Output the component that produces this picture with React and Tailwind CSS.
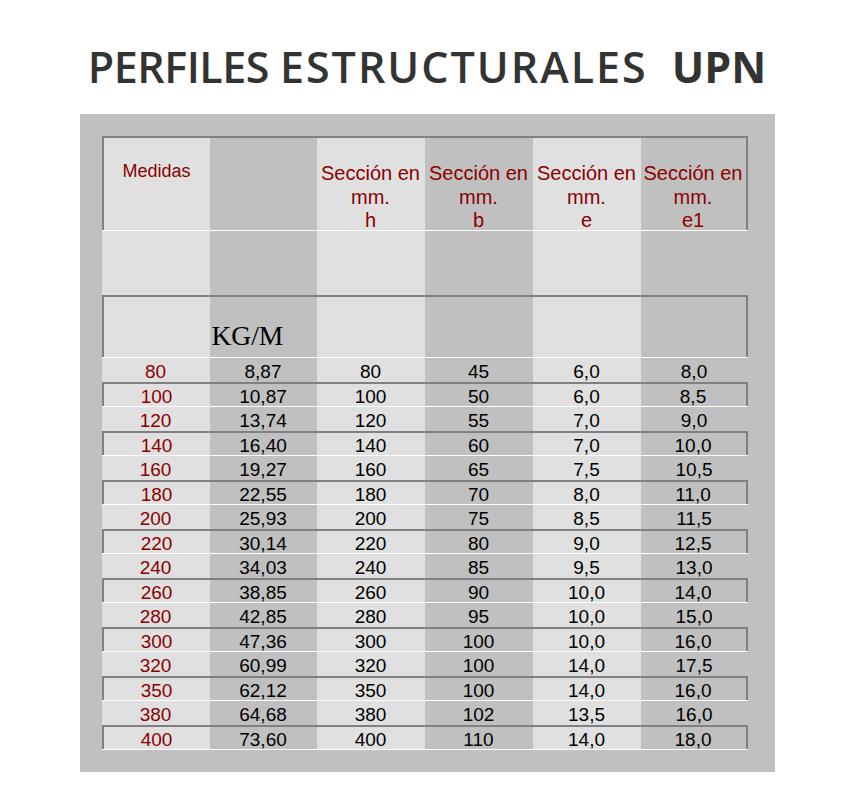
import React from 'react';

const rows = [
    ['80', '8,87', '80', '45', '6,0', '8,0'],
    ['100', '10,87', '100', '50', '6,0', '8,5'],
    ['120', '13,74', '120', '55', '7,0', '9,0'],
    ['140', '16,40', '140', '60', '7,0', '10,0'],
    ['160', '19,27', '160', '65', '7,5', '10,5'],
    ['180', '22,55', '180', '70', '8,0', '11,0'],
    ['200', '25,93', '200', '75', '8,5', '11,5'],
    ['220', '30,14', '220', '80', '9,0', '12,5'],
    ['240', '34,03', '240', '85', '9,5', '13,0'],
    ['260', '38,85', '260', '90', '10,0', '14,0'],
    ['280', '42,85', '280', '95', '10,0', '15,0'],
    ['300', '47,36', '300', '100', '10,0', '16,0'],
    ['320', '60,99', '320', '100', '14,0', '17,5'],
    ['350', '62,12', '350', '100', '14,0', '16,0'],
    ['380', '64,68', '380', '102', '13,5', '16,0'],
    ['400', '73,60', '400', '110', '14,0', '18,0'],
];

const widths = ['w-[108px]', 'w-[107px]', 'w-[108px]', 'w-[108px]', 'w-[108px]', 'w-[107px]'];
const shade = (i) => (i % 2 === 0 ? 'bg-[#e0e0e0]' : 'bg-[#c0c0c0]');

// one table row; boxed rows get the dark grey frame, the rest a thin white line on top
const Row = ({ boxed, height, children }) => (
    <div className={`flex ${height}`}>
        {React.Children.map(children, (cell, i) => (
            <div
                className={`${widths[i]} ${shade(i)} ${
                    boxed ? 'border-t-2 border-[#808080]' : 'border-t border-white'
                } ${boxed && i === 0 ? 'border-l-2' : ''} ${boxed && i === 5 ? 'border-r-2' : ''} flex flex-col`}
            >
                {cell}
            </div>
        ))}
    </div>
);

const Seccion = ({ letter }) => (
    <div className="pt-[24px] text-center text-[20px] leading-[23.5px] whitespace-nowrap text-[#8b0000]">
        Sección en
        <br />
        mm.
        <br />
        {letter}
    </div>
);

const App = () => {
    return (
        <div className="min-h-screen bg-white pb-5" style={{ fontFamily: '"Liberation Sans", Arial, sans-serif' }}>
            <h1
                className="pt-[42px] pb-[23px] text-center text-[43px] font-semibold leading-[49px] whitespace-nowrap text-[#333333]"
                style={{ fontFamily: '"Open Sans", sans-serif' }}
            >
                <span className="tracking-[-0.5px]">PERFILES</span>{' '}
                <span className="tracking-[2px]">ESTRUCTURALES</span>
                <span className="ml-[24px] font-bold">UPN</span>
            </h1>

            <div className="mx-auto w-[695px] bg-[#c0c0c0] pl-[22px] pr-[27px] py-[22px]">
                <Row boxed height="h-[94px]">
                    <div className="pt-[20px] text-center text-[18px] text-[#8b0000]">Medidas</div>
                    <div />
                    <Seccion letter="h" />
                    <Seccion letter="b" />
                    <Seccion letter="e" />
                    <Seccion letter="e1" />
                </Row>
                <Row height="h-[65px]">
                    <div />
                    <div />
                    <div />
                    <div />
                    <div />
                    <div />
                </Row>
                <Row boxed height="h-[62px]">
                    <div />
                    <div
                        className="mt-auto pb-[8px] pl-[2px] text-[27.5px] leading-none text-black"
                        style={{ fontFamily: '"Liberation Serif", "Times New Roman", serif' }}
                    >
                        KG/M
                    </div>
                    <div />
                    <div />
                    <div />
                    <div />
                </Row>
                {rows.map((r, idx) => (
                    <Row key={r[0]} boxed={idx % 2 === 1} height="h-[24.5px]">
                        {r.map((v, i) => (
                            <div
                                key={i}
                                className={`flex-1 flex items-center justify-center pt-[3px] text-[19px] leading-none ${
                                    i === 0 ? 'text-[#8b0000]' : 'text-black'
                                }`}
                            >
                                {v}
                            </div>
                        ))}
                    </Row>
                ))}
                <div className="h-px w-[646px] bg-white" />
            </div>
        </div>
    );
};

export default App;
